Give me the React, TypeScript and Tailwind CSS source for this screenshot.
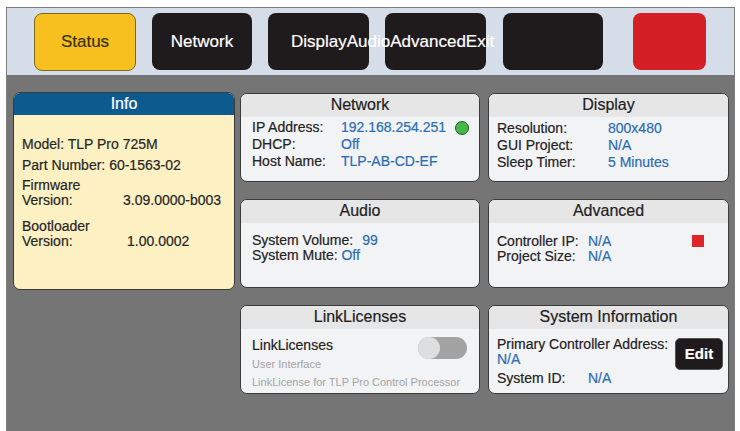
import React from "react";

const F = { fontFamily: '"Liberation Sans", Arial, sans-serif' };

function Panel({ title, children, className = "" }: { title: string; children?: React.ReactNode; className?: string }) {
  return (
    <div className={"h-[89px] rounded-[7px] border-[1.5px] border-[#3a3a3a] bg-[#f2f3f5] overflow-hidden flex flex-col " + className}>
      <div className="h-[23px] shrink-0 bg-[#e6e6e7] flex items-center justify-center pb-[1px] text-[16px] text-[#1e1e1e] leading-none">
        {title}
      </div>
      <div className="flex-1 relative">{children}</div>
    </div>
  );
}

export default function App() {
  return (
    <div style={F} className="w-[740px] h-[431px] bg-white pl-[6px] pr-[5px] pt-[7px] overflow-hidden [-webkit-text-stroke:0.2px_currentColor]">
      <div className="h-full flex flex-col border-l border-t border-r border-[#7c7c7c]">
        {/* top bar */}
        <div className="h-[67px] shrink-0 bg-[#d5dde9] flex items-start pt-[5px] pl-[27px]">
          <div className="w-[102px] h-[58px] rounded-[8px] bg-[#f7c01f] border-[1.5px] border-[#7d6822] flex items-center justify-center text-[17px] text-[#3a3316]">
            Status
          </div>
          <div className="ml-[16px] w-[100px] h-[57px] rounded-[8px] bg-[#1f1b1c] flex items-center justify-center text-[17px] text-white">
            Network
          </div>
          <div className="ml-[16px] w-[101px] h-[57px] rounded-[8px] bg-[#1f1b1c] flex items-center pl-[23px] text-[17px] text-white whitespace-nowrap">
            <span className="relative z-10">DisplayAudioAdvancedExit</span>
          </div>
          <div className="ml-[16px] w-[101px] h-[57px] rounded-[8px] bg-[#1f1b1c]" />
          <div className="ml-[17px] w-[100px] h-[57px] rounded-[8px] bg-[#1f1b1c]" />
          <div className="ml-[30px] w-[73px] h-[57px] rounded-[8px] bg-[#d41f26]" />
        </div>

        {/* main */}
        <div className="flex-1 bg-[#757575] flex items-start pt-[17px] pl-[6px]">
          {/* Info */}
          <div className="w-[222px] h-[198px] rounded-[7px] border-[1.5px] border-[#3a3a3a] bg-[#fdf0c2] overflow-hidden flex flex-col">
            <div className="h-[22px] shrink-0 bg-[#0c5a8e] flex items-center justify-center text-[16px] text-white leading-none">
              Info
            </div>
            <div className="pl-[8px] pt-[21px] text-[14px] text-[#262626]">
              <div className="leading-[16px]">Model: TLP Pro 725M</div>
              <div className="leading-[16px] mt-[5px]">Part Number: 60-1563-02</div>
              <div className="leading-[15px] mt-[5px]">Firmware</div>
              <div className="leading-[15px] flex">
                <span className="w-[101px]">Version:</span>
                <span>3.09.0000-b003</span>
              </div>
              <div className="leading-[15px] mt-[11px]">Bootloader</div>
              <div className="leading-[15px] flex">
                <span className="w-[105px]">Version:</span>
                <span>1.00.0002</span>
              </div>
            </div>
          </div>

          {/* right grid */}
          <div className="ml-[5px] mt-[1px] grid grid-cols-[240px_241px] gap-x-[8px] gap-y-[17px]">
            <Panel title="Network">
              <div className="pl-[11px] pt-[2px] text-[14px] text-[#222] leading-[17px]">
                <div className="flex"><span className="w-[89px]">IP Address:</span><span className="text-[#2b6cb3]">192.168.254.251</span></div>
                <div className="flex"><span className="w-[89px]">DHCP:</span><span className="text-[#2b6cb3]">Off</span></div>
                <div className="flex"><span className="w-[89px]">Host Name:</span><span className="text-[#2b6cb3]">TLP-AB-CD-EF</span></div>
              </div>
              <div className="absolute left-[214px] top-[4px] w-[14px] h-[14px] rounded-full bg-[#45b845] border border-[#2b5e2b]" />
            </Panel>
            <Panel title="Display">
              <div className="pl-[8px] pt-[3px] text-[14px] text-[#222] leading-[17px]">
                <div className="flex"><span className="w-[111px]">Resolution:</span><span className="text-[#2b6cb3]">800x480</span></div>
                <div className="flex"><span className="w-[111px]">GUI Project:</span><span className="text-[#2b6cb3]">N/A</span></div>
                <div className="flex"><span className="w-[111px]">Sleep Timer:</span><span className="text-[#2b6cb3]">5 Minutes</span></div>
              </div>
            </Panel>
            <Panel title="Audio">
              <div className="pl-[11px] pt-[10px] text-[14px] text-[#222] leading-[15px]">
                <div>System Volume:<span className="ml-[9px] text-[#2b6cb3]">99</span></div>
                <div>System Mute: <span className="text-[#2b6cb3]">Off</span></div>
              </div>
            </Panel>
            <Panel title="Advanced">
              <div className="pl-[8px] pt-[11px] text-[14px] text-[#222] leading-[15px]">
                <div className="flex"><span className="w-[91px]">Controller IP:</span><span className="text-[#2b6cb3]">N/A</span></div>
                <div className="flex"><span className="w-[91px]">Project Size:</span><span className="text-[#2b6cb3]">N/A</span></div>
              </div>
              <div className="absolute left-[203px] top-[12px] w-[12px] h-[12px] bg-[#e0242a]" />
            </Panel>
            <Panel title="LinkLicenses">
              <div className="pl-[11px] pt-[8px] text-[#222]">
                <div className="text-[14px] leading-[17px]">LinkLicenses</div>
                <div className="text-[11px] leading-[14px] mt-[3px] text-[#a4a4a4] [-webkit-text-stroke:0px]">User Interface</div>
                <div className="text-[11px] leading-[14px] mt-[4px] text-[#a4a4a4] [-webkit-text-stroke:0px]">LinkLicense for TLP Pro Control Processor</div>
              </div>
              <div className="absolute left-[177px] top-[8px] w-[49px] h-[22px] rounded-full bg-[#a3a3a3]">
                <div className="w-[22px] h-[22px] rounded-full bg-[#dedede]" />
              </div>
            </Panel>
            <Panel title="System Information">
              <div className="pl-[8px] pt-[8px] text-[14px] text-[#222]">
                <div className="leading-[15px]">Primary Controller Address:</div>
                <div className="leading-[14px] text-[#2b6cb3]">N/A</div>
                <div className="leading-[16px] mt-[4px] flex"><span className="w-[91px]">System ID:</span><span className="text-[#2b6cb3]">N/A</span></div>
              </div>
              <div className="absolute left-[186px] top-[9px] w-[48px] h-[32px] rounded-[5px] bg-[#1f1b1c] border border-[#555] flex items-center justify-center text-white font-bold text-[15px]">
                Edit
              </div>
            </Panel>
          </div>
        </div>
      </div>
    </div>
  );
}
